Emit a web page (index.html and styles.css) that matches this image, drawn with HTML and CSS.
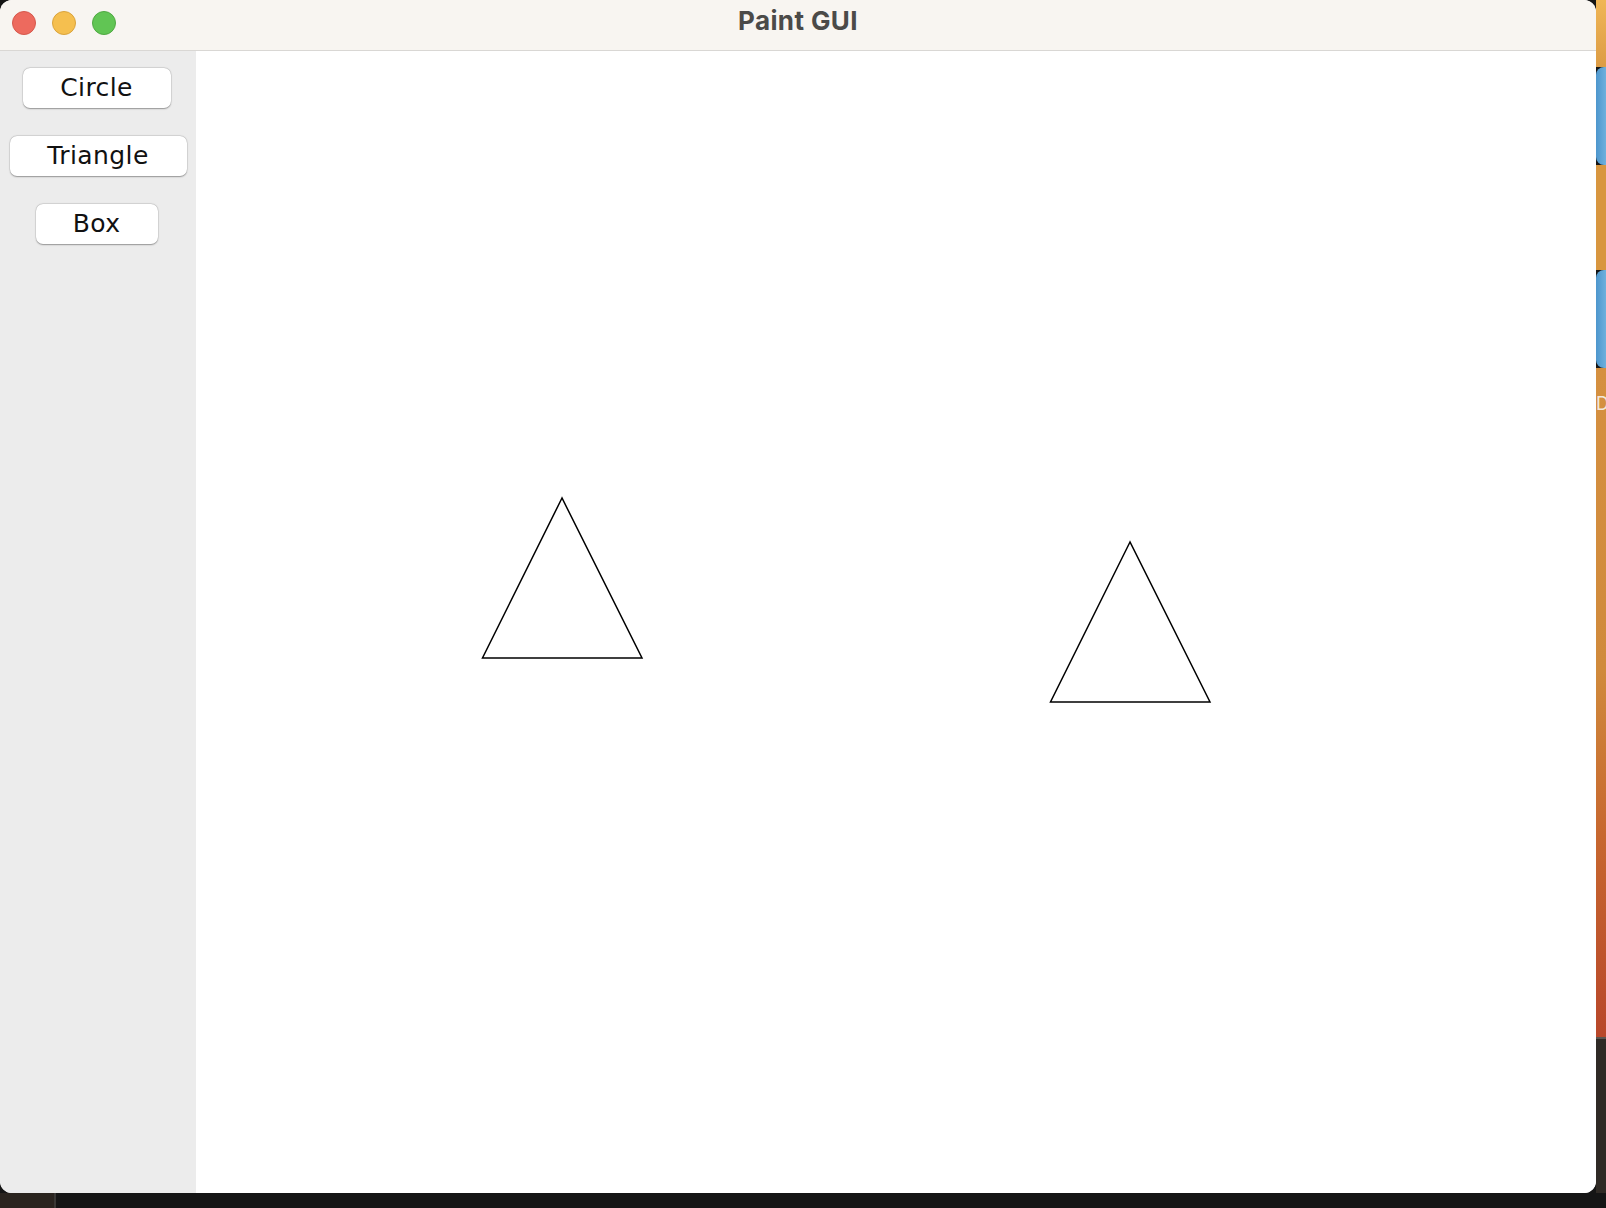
FILE: index.html
```html
<!DOCTYPE html>
<html>
<head>
<meta charset="utf-8">
<link rel="stylesheet" href="styles.css">
<title>Paint GUI</title>
</head>
<body>
<div class="desktop">
  <div class="window">
    <div class="titlebar">
      <div class="lights">
        <span class="light red"></span>
        <span class="light yellow"></span>
        <span class="light green"></span>
      </div>
      <div class="title">Paint GUI</div>
    </div>
    <div class="content">
      <div class="sidebar">
        <button class="btn btn-circle">Circle</button>
        <button class="btn btn-triangle">Triangle</button>
        <button class="btn btn-box">Box</button>
      </div>
      <div class="canvas">
        <svg class="drawing" width="1400" height="1142" viewBox="0 0 1400 1142">
          <polygon points="366,447 286.5,607 446,607" fill="none" stroke="#000" stroke-width="1.5"/>
          <polygon points="934,491 854.5,651 1014,651" fill="none" stroke="#000" stroke-width="1.5"/>
        </svg>
      </div>
    </div>
  </div>
  <div class="side-strip">
    <div class="s-orange1"></div>
    <div class="s-blue"></div>
    <div class="s-orange2"></div>
    <div class="s-blue"></div>
    <div class="s-orange3"><span class="s-letter">D</span></div>
    <div class="s-dark"></div>
  </div>
</div>
<div class="dock-strip">
  <div class="dock-left"></div>
  <div class="dock-right"></div>
</div>
</body>
</html>
```
FILE: styles.css
```css
html, body {
  margin: 0;
  padding: 0;
}
body {
  width: 1606px;
  height: 1208px;
  overflow: hidden;
  background: #151515;
  font-family: "DejaVu Sans", "Liberation Sans", sans-serif;
}
.desktop {
  display: flex;
  height: 1193px;
}
.window {
  width: 1596px;
  height: 1193px;
  display: flex;
  flex-direction: column;
  background: #fff;
  border-radius: 12px;
  overflow: hidden;
  position: relative;
  z-index: 1;
}
.titlebar {
  height: 51px;
  flex: 0 0 51px;
  box-sizing: border-box;
  background: #f8f5f1;
  border-bottom: 1px solid #d9d7d4;
  display: flex;
  align-items: center;
  position: relative;
}
.lights {
  display: flex;
  gap: 16px;
  padding-left: 12px;
  margin-top: -5px;
}
.light {
  width: 24px;
  height: 24px;
  border-radius: 50%;
  box-sizing: border-box;
}
.red { background: #ed6a5e; border: 1px solid #d5584c; }
.yellow { background: #f5bf4f; border: 1px solid #d9a33c; }
.green { background: #61c554; border: 1px solid #50a843; }
.title {
  position: absolute;
  left: 0;
  right: 0;
  top: 5px;
  text-align: center;
  font-family: "Inter", "Roboto", sans-serif;
  font-weight: 700;
  font-size: 26px;
  letter-spacing: 0.4px;
  line-height: 32px;
  color: #4b4a48;
}
.content {
  flex: 1;
  display: flex;
}
.sidebar {
  width: 196px;
  flex: 0 0 196px;
  background: #ececec;
  display: flex;
  flex-direction: column;
  align-items: center;
  padding-top: 17px;
  gap: 28px;
  box-sizing: border-box;
}
.btn {
  height: 40px;
  background: #fff;
  border: none;
  border-radius: 7px;
  box-shadow: 0 0.5px 1.5px rgba(0,0,0,0.35), 0 0 0 0.5px rgba(0,0,0,0.08);
  font-family: "DejaVu Sans", "Liberation Sans", sans-serif;
  font-size: 25px;
  letter-spacing: 0.4px;
  color: #111;
  padding: 0 0 2px 0;
  cursor: default;
}
.btn-circle { width: 148px; margin-right: 3px; }
.btn-triangle { width: 177px; }
.btn-box { width: 122px; margin-right: 3px; }
.canvas {
  flex: 1;
  background: #fff;
  position: relative;
}
.drawing {
  display: block;
}
.side-strip {
  width: 10px;
  flex: 0 0 10px;
  display: flex;
  flex-direction: column;
  overflow: hidden;
}
.s-orange1 { height: 67px; background: linear-gradient(#f0b656, #dc9c45); }
.s-blue {
  height: 98px;
  background: linear-gradient(90deg, #4d96cd, #6eb0dd);
  border-radius: 8px 0 0 8px;
}
.s-orange2 { height: 105px; background: #d8963f; }
.s-orange3 {
  height: 669px;
  background: linear-gradient(#d59040 0%, #d08a3c 45%, #c7672f 70%, #b8472a 100%);
  position: relative;
}
.s-letter {
  position: absolute;
  left: 0;
  top: 27px;
  font-family: "Inter", sans-serif;
  font-size: 18px;
  color: #f2e8dc;
  line-height: 1;
}
.s-dark {
  flex: 1;
  background: #2f2a25;
  border-top: 2px solid #5a5550;
}
.dock-strip {
  display: flex;
  height: 15px;
}
.dock-left {
  width: 54px;
  background: #2a241f;
  border-right: 2px solid #3a3835;
}
.dock-right {
  flex: 1;
  background: #151515;
}
```
